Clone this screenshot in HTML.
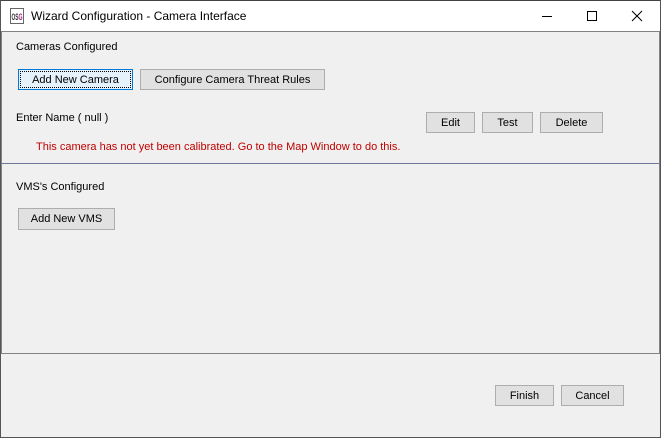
<!DOCTYPE html>
<html><head><style>
*{margin:0;padding:0;box-sizing:border-box}
body{width:661px;height:438px;background:#f0f0f0;font-family:"Liberation Sans",sans-serif;font-size:11px;color:#000;position:relative;overflow:hidden}
.win{position:absolute;left:0;top:0;width:661px;height:438px;border:1px solid #555;border-top-color:#444}
.title{position:absolute;left:1px;top:1px;width:659px;height:30px;background:#fff}
.t{position:absolute;white-space:nowrap}
.btn{position:absolute;background:#e1e1e1;border:1px solid #adadad;text-align:center;line-height:20px;font-size:11px}
.panel{position:absolute;left:1px;width:659px;border:1px solid #828282}
</style></head><body>
<div class="win"></div>
<div class="title">
 <svg style="position:absolute;left:9px;top:7px" width="14" height="16" viewBox="0 0 14 16"><rect x="0.5" y="0.5" width="13" height="15" fill="#fff" stroke="#666"/><text x="1.5" y="12" font-size="9" font-family="Liberation Sans" font-weight="bold" fill="#333" textLength="7" lengthAdjust="spacingAndGlyphs">OS</text><text x="8.5" y="12" font-size="9" font-family="Liberation Sans" font-weight="bold" fill="#a02080" textLength="4" lengthAdjust="spacingAndGlyphs">G</text></svg>
 <div class="t" style="left:30px;top:8px;font-size:12px">Wizard Configuration - Camera Interface</div>
 <svg style="position:absolute;left:540px;top:9px" width="12" height="12"><line x1="1" y1="6.5" x2="11" y2="6.5" stroke="#000"/></svg>
 <svg style="position:absolute;left:585px;top:9px" width="12" height="12"><rect x="1.5" y="1.5" width="9" height="9" fill="none" stroke="#000"/></svg>
 <svg style="position:absolute;left:630px;top:9px" width="12" height="12"><path d="M1 1L11 11M11 1L1 11" stroke="#000"/></svg>
</div>
<div class="panel" style="top:31px;height:133px;border-bottom-color:#6b7899"></div>
<div class="panel" style="top:163px;height:191px;border-top:none"></div>
<div class="t" style="left:16px;top:41px">Cameras Configured</div>
<div class="btn" style="left:18px;top:69px;width:115px;height:21px;background:#e5f1fb;border-color:#0078d7"><div style="position:absolute;left:1px;top:1px;right:1px;bottom:1px;border:1px dotted #000"></div>Add New Camera</div>
<div class="btn" style="left:140px;top:69px;width:185px;height:21px">Configure Camera Threat Rules</div>
<div class="t" style="left:16px;top:112px">Enter Name ( null )</div>
<div class="btn" style="left:426px;top:112px;width:49px;height:21px">Edit</div>
<div class="btn" style="left:482px;top:112px;width:51px;height:21px">Test</div>
<div class="btn" style="left:540px;top:112px;width:63px;height:21px">Delete</div>
<div class="t" style="left:36px;top:141px;color:#c00000">This camera has not yet been calibrated. Go to the Map Window to do this.</div>
<div class="t" style="left:16px;top:181px">VMS's Configured</div>
<div class="btn" style="left:18px;top:208px;width:97px;height:22px">Add New VMS</div>
<div class="btn" style="left:495px;top:385px;width:59px;height:21px">Finish</div>
<div class="btn" style="left:561px;top:385px;width:63px;height:21px">Cancel</div>
</body></html>
